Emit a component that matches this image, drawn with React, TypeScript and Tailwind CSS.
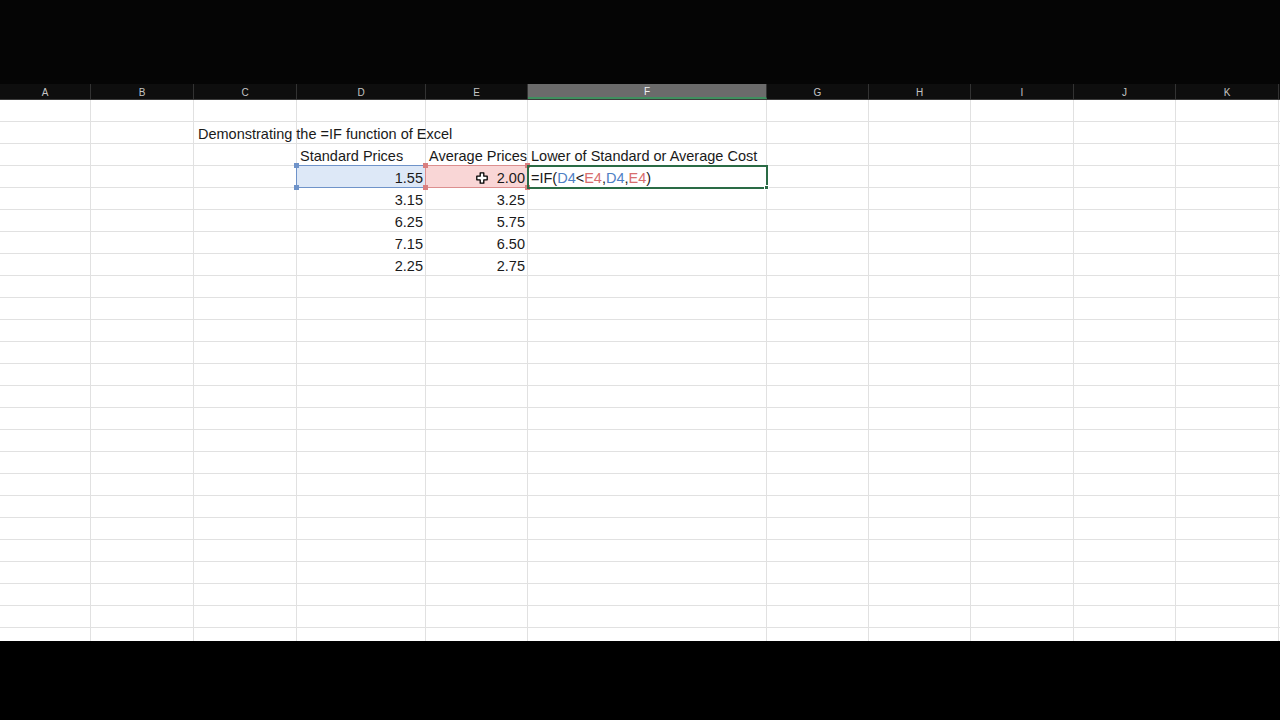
import type { ReactNode } from 'react'

const cols = ['A', 'B', 'C', 'D', 'E', 'F', 'G', 'H', 'I', 'J', 'K']
const widths = [91, 103, 103, 129, 102, 239, 102, 102, 103, 102, 103]

const prices: [string, string][] = [
  ['1.55', '2.00'],
  ['3.15', '3.25'],
  ['6.25', '5.75'],
  ['7.15', '6.50'],
  ['2.25', '2.75'],
]

const gridCols = 'grid-cols-[91px_103px_103px_129px_102px_239px_102px_102px_103px_102px_103px_1fr]'

function Handle({ pos, color }: { pos: string; color: string }) {
  return <span className={`absolute z-30 h-[5px] w-[5px] ${pos} ${color}`} />
}

function CursorIcon() {
  return (
    <svg width="12" height="12" viewBox="0 0 12 12" className="mr-[9px]">
      <path
        d="M4.2 0.8h3.6v3.4h3.4v3.6H7.8v3.4H4.2V7.8H0.8V4.2h3.4z"
        fill="white"
        stroke="black"
        strokeWidth="1.3"
        strokeLinejoin="round"
      />
    </svg>
  )
}

function Formula() {
  return (
    <span>
      =IF(<span className="text-[#4e80c4]">D4</span>&lt;<span className="text-[#d86d6d]">E4</span>,
      <span className="text-[#4e80c4]">D4</span>,<span className="text-[#d86d6d]">E4</span>)
    </span>
  )
}

function cellContent(row: number, col: number): { node?: ReactNode; right?: boolean; overflow?: boolean } {
  if (row === 1 && col === 2) return { node: 'Demonstrating the =IF function of Excel', overflow: true }
  if (row === 2 && col === 3) return { node: 'Standard Prices' }
  if (row === 2 && col === 4) return { node: 'Average Prices' }
  if (row === 2 && col === 5) return { node: 'Lower of Standard or Average Cost' }
  if (row === 3 && col === 5) return { node: <Formula /> }
  if (row >= 3 && row <= 7 && col === 3) return { node: prices[row - 3][0], right: true }
  if (row >= 3 && row <= 7 && col === 4)
    return {
      node:
        row === 3 ? (
          <span className="flex items-center">
            <CursorIcon />
            {prices[0][1]}
          </span>
        ) : (
          prices[row - 3][1]
        ),
      right: true,
    }
  return {}
}

function Cell({ row, col }: { row: number; col: number }) {
  const { node, right, overflow } = cellContent(row, col)
  const isD4 = row === 3 && col === 3
  const isE4 = row === 3 && col === 4
  const isF4 = row === 3 && col === 5
  const open = overflow || isD4 || isE4 || isF4
  return (
    <div
      className={`relative flex h-[22px] items-end border-b border-r border-[#e1e1e1] pb-[2px] leading-[14px] ${
        right ? 'justify-end pr-[2px]' : 'pl-[3px]'
      } ${open ? 'z-10 overflow-visible whitespace-nowrap' : 'overflow-hidden whitespace-nowrap'} ${
        isD4 ? 'bg-[#dde8f7]' : ''
      } ${isE4 ? 'bg-[#f9d6d6]' : ''} ${isF4 ? 'z-20' : ''}`}
    >
      {isD4 && (
        <>
          <span className="absolute -left-[1px] -top-[1px] h-[23px] w-[131px] border border-[#6f93c9]" />
          <Handle pos="-left-[3px] -top-[3px]" color="bg-[#6f93c9]" />
          <Handle pos="-left-[3px] -bottom-[3px]" color="bg-[#6f93c9]" />
        </>
      )}
      {isE4 && (
        <>
          <span className="absolute -left-[1px] -top-[1px] h-[23px] w-[104px] border border-[#dc8f8f]" />
          <Handle pos="-left-[3px] -top-[3px]" color="bg-[#d97f7f]" />
          <Handle pos="-left-[3px] -bottom-[3px]" color="bg-[#d97f7f]" />
          <Handle pos="-right-[3px] -top-[3px]" color="bg-[#d97f7f]" />
          <Handle pos="-right-[3px] -bottom-[3px]" color="bg-[#d97f7f]" />
        </>
      )}
      {isF4 && (
        <>
          <span className="absolute -left-[1px] -top-[1px] h-[24px] w-[241px] border-2 border-[#2a6b45]" />
          <span className="absolute -bottom-[3px] -right-[3px] h-[5px] w-[5px] border border-white bg-[#2a6b45]" />
        </>
      )}
      <span className={overflow ? 'absolute bottom-[2px] left-[4px]' : 'relative'}>{node}</span>
    </div>
  )
}

export default function App() {
  const rows = Array.from({ length: 25 }, (_, i) => i)
  return (
    <div
      className="flex h-[720px] w-[1280px] flex-col bg-black text-[14.5px] text-[#1a1a1a]"
      style={{ fontFamily: '"Liberation Sans", Arial, sans-serif' }}
    >
      <div className="h-[84px] bg-[#050505]" />
      <div className={`grid h-[16px] ${gridCols} border-b border-[#3c3c3c] bg-[#0e0e0e] text-[10px] text-[#c4c4c4]`}>
        {cols.map((c) => (
          <div
            key={c}
            className={`flex items-center justify-center border-r border-[#333] pt-[2px] leading-none ${
              c === 'F' ? 'border-b-2 border-b-[#3f8f5f] bg-[#6b6b6b] text-[#f2f2f2]' : ''
            }`}
          >
            {c}
          </div>
        ))}
        <div />
      </div>
      <div className="h-[541px] overflow-hidden bg-white">
        <div className={`grid ${gridCols}`}>
          {rows.map((r) => (
            <div key={r} className="contents">
              {widths.map((_, c) => (
                <Cell key={c} row={r} col={c} />
              ))}
              <div className="h-[22px] border-b border-[#e1e1e1]" />
            </div>
          ))}
        </div>
      </div>
      <div className="flex-1 bg-black" />
    </div>
  )
}
